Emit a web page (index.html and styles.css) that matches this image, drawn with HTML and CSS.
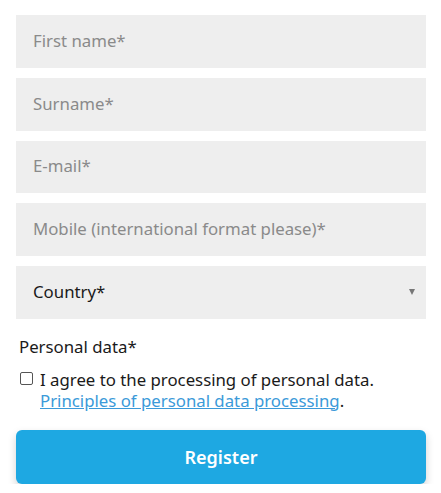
FILE: index.html
```html
<!DOCTYPE html>
<html>
<head>
<meta charset="utf-8">
<link rel="stylesheet" href="styles.css">
</head>
<body>
<form class="form">
  <input class="field" type="text" placeholder="First name*">
  <input class="field" type="text" placeholder="Surname*">
  <input class="field" type="text" placeholder="E-mail*">
  <input class="field" type="text" placeholder="Mobile (international format please)*">
  <div class="field select">
    <span>Country*</span>
    <span class="arrow"></span>
  </div>
  <div class="consent">
    <div class="label">Personal data*</div>
    <label class="check">
      <span class="box"></span>
      <span class="check-text">I agree to the processing of personal data.<br><a href="#">Principles of personal data processing</a>.</span>
    </label>
  </div>
  <button type="button" class="btn">Register</button>
</form>
</body>
</html>
```
FILE: styles.css
```css
html, body {
  margin: 0;
  padding: 0;
  background: #fff;
}
body {
  font-family: "Noto Sans", "Open Sans", sans-serif;
}
.form {
  width: 410px;
  padding: 15px 0 0 16px;
  display: flex;
  flex-direction: column;
}
.field {
  box-sizing: border-box;
  height: 52.75px;
  margin-bottom: 10px;
  border: none;
  outline: none;
  background: #eeeeee;
  padding: 0 17px 2px;
  font-family: inherit;
  font-size: 16.8px;
  color: #222;
}
.field::placeholder {
  color: #8a8a8a;
  opacity: 1;
}
.select {
  display: flex;
  align-items: center;
  justify-content: space-between;
  padding: 0 11px 1px 17px;
  color: #1a1a1a;
}
.arrow {
  width: 0;
  height: 0;
  border-left: 3.5px solid transparent;
  border-right: 3.5px solid transparent;
  border-top: 6px solid #777;
  margin-top: 1px;
}
.consent {
  padding: 7px 0 0 3px;
  font-size: 16.8px;
  color: #1a1a1a;
}
.label {
  line-height: 22px;
}
.check {
  display: flex;
  margin-top: 10.75px;
  line-height: 21px;
}
.box {
  box-sizing: border-box;
  width: 13px;
  height: 13px;
  border: 1px solid #555;
  border-radius: 2px;
  margin: 3px 7px 0 1px;
  flex: none;
  background: #fff;
}
.check-text a {
  color: #3b9ad9;
  text-decoration: underline;
}
.btn {
  margin-top: 19.5px;
  height: 54px;
  border: none;
  border-radius: 6px;
  background: #1ea8e2;
  color: #fff;
  font-family: inherit;
  font-size: 18px;
  font-weight: 650;
  box-shadow: 0 4px 8px rgba(0,0,0,0.18);
}
```
